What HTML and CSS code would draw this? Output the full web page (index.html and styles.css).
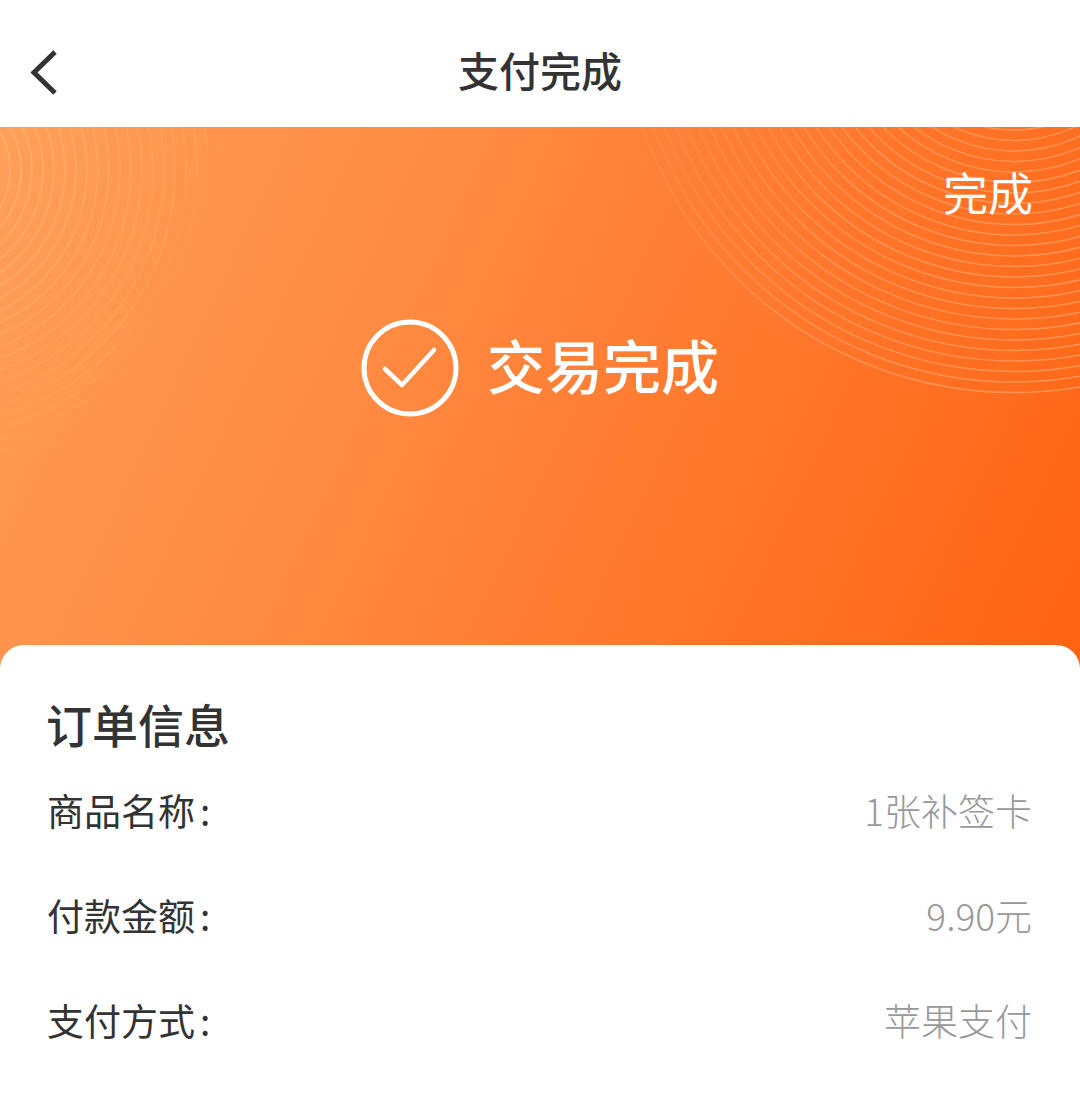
FILE: index.html
```html
<!DOCTYPE html>
<html lang="zh-CN">
<head>
<meta charset="utf-8">
<title>支付完成</title>
<link rel="stylesheet" href="styles.css">
</head>
<body>
<div class="page">
  <header class="nav">
    <svg class="back" viewBox="0 0 32 46" width="32" height="46"><path d="M27 3 L6 23.5 L27 44" fill="none" stroke="#333" stroke-width="5"/></svg>
    <h1 class="nav-title">支付完成</h1>
  </header>
  <section class="hero">
    <svg class="arcs" viewBox="0 0 1080 540" width="1080" height="540" aria-hidden="true">
      <defs>
        <radialGradient id="fadeL" gradientUnits="userSpaceOnUse" cx="-70" cy="43" r="310">
          <stop offset="0" stop-color="#ffd9b5" stop-opacity=".32"/>
          <stop offset=".5" stop-color="#ffd9b5" stop-opacity=".18"/>
          <stop offset="1" stop-color="#ffd9b5" stop-opacity="0"/>
        </radialGradient>
        <linearGradient id="fadeR" gradientUnits="userSpaceOnUse" x1="620" y1="0" x2="1080" y2="200">
          <stop offset="0" stop-color="#ffc596" stop-opacity=".1"/>
          <stop offset=".5" stop-color="#ffc596" stop-opacity=".36"/>
          <stop offset="1" stop-color="#ffc596" stop-opacity=".46"/>
        </linearGradient>
      </defs>
      <g class="arc-right" id="ar"></g>
      <g class="arc-left" id="al"></g>
    </svg>
    <div class="hero-action">完成</div>
    <div class="status">
      <svg class="status-icon" viewBox="0 0 98 98" width="98" height="98"><circle cx="49" cy="49" r="46" fill="none" stroke="#fff" stroke-width="5"/><path d="M24 51 L41 67 L73 32" transform="translate(0 -1)" fill="none" stroke="#fff" stroke-width="4.5" stroke-linecap="round" stroke-linejoin="round"/></svg>
      <span class="status-text">交易完成</span>
    </div>
  </section>
  <section class="card">
    <h2 class="card-title">订单信息</h2>
    <div class="row"><span class="label">商品名称<span class="colon">:</span></span><span class="value">1张补签卡</span></div>
    <div class="row"><span class="label">付款金额<span class="colon">:</span></span><span class="value">9.90元</span></div>
    <div class="row"><span class="label">支付方式<span class="colon">:</span></span><span class="value">苹果支付</span></div>
  </section>
</div>
<script src="arcs.js"></script>
</body>
</html>
```
FILE: styles.css
```css
* { box-sizing: border-box; }
html, body { margin: 0; padding: 0; background: #fff; }
body { font-family: "Noto Sans CJK SC", "Noto Sans", sans-serif; color: #333; }
.page { width: 1080px; height: 1103px; overflow: hidden; display: flex; flex-direction: column; }
.nav { height: 127px; flex: none; display: flex; align-items: center; justify-content: center; position: relative; background: #fff; }
.back { position: absolute; left: 28px; top: 49px; }
.nav-title { margin: 0; font-size: 41px; font-weight: 500; line-height: 1; padding-top: 12px; color: #333; }
.hero { height: 540px; flex: none; position: relative; overflow: hidden; padding: 0 47px 0 0; background: linear-gradient(115deg, #ff9f58 0%, #ff8e46 30%, #ff7a2f 62%, #ff6312 100%); }
.arcs { position: absolute; left: 0; top: 0; }
.arc-right { fill: none; stroke: url(#fadeR); stroke-width: 1.5; }
.arc-left { fill: none; stroke: url(#fadeL); stroke-width: 2; }
.hero-action { position: relative; text-align: right; margin-top: 35px; font-size: 45px; line-height: 60px; color: #fff; }
.status { position: relative; display: flex; align-items: center; justify-content: center; gap: 28px; margin-top: 98px; padding-left: 47px; }
.status-icon { flex: none; margin-top: -1px; }
.status-text { font-size: 58px; font-weight: 500; line-height: 84px; padding-bottom: 10px; color: #fff; }
.card { flex: 1; position: relative; margin-top: -22px; background: #fff; border-radius: 24px 24px 0 0; padding: 44px 48px 0 46px; }
.card-title { margin: 0 0 14px; font-size: 46px; font-weight: 500; line-height: 68px; color: #333; }
.row { display: flex; justify-content: space-between; align-items: center; height: 105px; font-size: 37px; font-weight: 400; }
.row:first-of-type { margin-top: -14px; }
.label { color: #333; padding-left: 1px; }
.colon { margin-left: 5px; }
.value { color: #999; font-weight: 300; }
```
FILE: arcs.js
```js
var ns = "http://www.w3.org/2000/svg";
function draw(id, cx, cy, from, to, step) {
  var g = document.getElementById(id);
  for (var r = from; r <= to; r += step) {
    var c = document.createElementNS(ns, "circle");
    c.setAttribute("cx", cx);
    c.setAttribute("cy", cy);
    c.setAttribute("r", r);
    g.appendChild(c);
  }
}
draw("ar", 1014, -127, 130, 393, 10.5);
draw("al", -70, 43, 80, 300, 11);
```
